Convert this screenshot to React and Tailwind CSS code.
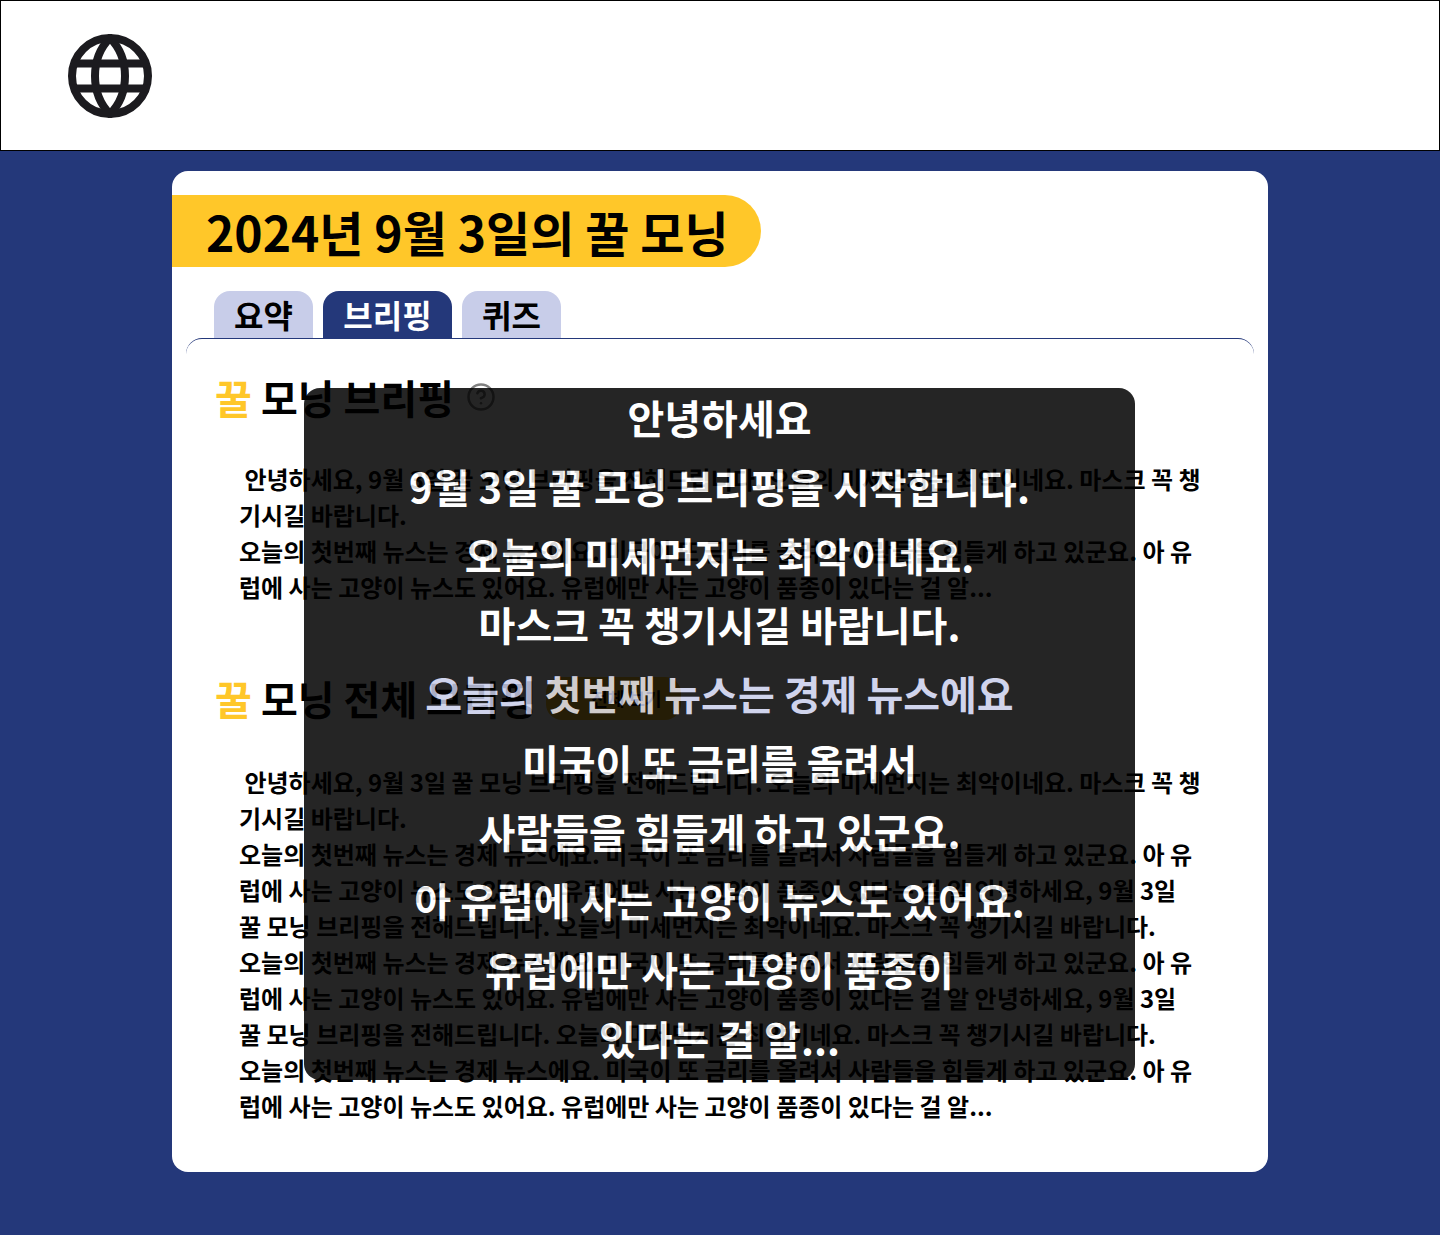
import React from 'react';
import { CircleHelp } from 'lucide-react';

const briefing = ` 안녕하세요, 9월 3일 꿀 모닝 브리핑을 전해드립니다. 오늘의 미세먼지는 최악이네요. 마스크 꼭 챙기시길 바랍니다.
오늘의 첫번째 뉴스는 경제 뉴스에요. 미국이 또 금리를 올려서 사람들을 힘들게 하고 있군요. 아 유럽에 사는 고양이 뉴스도 있어요. 유럽에만 사는 고양이 품종이 있다는 걸 알...`;

const fullBriefing = ` 안녕하세요, 9월 3일 꿀 모닝 브리핑을 전해드립니다. 오늘의 미세먼지는 최악이네요. 마스크 꼭 챙기시길 바랍니다.
오늘의 첫번째 뉴스는 경제 뉴스에요. 미국이 또 금리를 올려서 사람들을 힘들게 하고 있군요. 아 유럽에 사는 고양이 뉴스도 있어요. 유럽에만 사는 고양이 품종이 있다는 걸 알 안녕하세요, 9월 3일 꿀 모닝 브리핑을 전해드립니다. 오늘의 미세먼지는 최악이네요. 마스크 꼭 챙기시길 바랍니다.
오늘의 첫번째 뉴스는 경제 뉴스에요. 미국이 또 금리를 올려서 사람들을 힘들게 하고 있군요. 아 유럽에 사는 고양이 뉴스도 있어요. 유럽에만 사는 고양이 품종이 있다는 걸 알 안녕하세요, 9월 3일 꿀 모닝 브리핑을 전해드립니다. 오늘의 미세먼지는 최악이네요. 마스크 꼭 챙기시길 바랍니다.
오늘의 첫번째 뉴스는 경제 뉴스에요. 미국이 또 금리를 올려서 사람들을 힘들게 하고 있군요. 아 유럽에 사는 고양이 뉴스도 있어요. 유럽에만 사는 고양이 품종이 있다는 걸 알...`;

const captions = [
  '안녕하세요',
  '9월 3일 꿀 모닝 브리핑을 시작합니다.',
  '오늘의 미세먼지는 최악이네요.',
  '마스크 꼭 챙기시길 바랍니다.',
  '오늘의 첫번째 뉴스는 경제 뉴스에요',
  '미국이 또 금리를 올려서',
  '사람들을 힘들게 하고 있군요.',
  '아 유럽에 사는 고양이 뉴스도 있어요.',
  '유럽에만 사는 고양이 품종이',
  '있다는 걸 알...',
];

const Globe = () => (
  <svg width="84" height="84" viewBox="0 0 84 84" fill="none" stroke="#1c1b1f" strokeWidth="8">
    <circle cx="42" cy="42" r="38" />
    <path d="M42 4C22 24 22 60 42 80C62 60 62 24 42 4Z" />
    <path d="M4 29.5H80M4 54.5H80" />
  </svg>
);

const Tab = ({ label, active, width }) => (
  <div
    className={`${width} h-[47px] flex items-center justify-center rounded-t-2xl text-[32px] font-semibold pb-0.5 ${
      active ? 'bg-[#24387a] text-white' : 'bg-[#c8cde9] text-black'
    }`}
  >
    {label}
  </div>
);

const Heading = ({ children }) => (
  <h2 className="text-[40px] leading-[58px] font-bold text-black whitespace-nowrap">
    <span className="text-[#ffc729]">꿀</span> {children}
  </h2>
);

const App = () => {
  return (
    <div className="min-h-[1235px] bg-[#24387a] font-['Noto_Sans_CJK_KR','Noto_Sans',sans-serif]">
      <header className="h-[151px] bg-white border border-black flex items-center pl-[67px]">
        <Globe />
      </header>

      <main className="relative w-[1096px] h-[1001px] mx-auto mt-5 bg-white rounded-2xl pt-6">
        <div className="w-[589px] h-[72px] bg-[#ffc729] rounded-r-full flex items-center pl-[34px]">
          <h1 className="text-5xl font-bold text-black whitespace-nowrap">2024년 9월 3일의 꿀 모닝</h1>
        </div>

        <div className="flex gap-2.5 mt-6 ml-[42px]">
          <Tab label="요약" width="w-[99px]" />
          <Tab label="브리핑" width="w-[129px]" active />
          <Tab label="퀴즈" width="w-[99px]" />
        </div>

        <section className="mx-3.5 border-t border-[#24387a] rounded-t-2xl pt-[29px] pl-[29px]">
          <div className="flex items-center gap-3">
            <Heading>모닝 브리핑</Heading>
            <CircleHelp size={30} strokeWidth={2} className="text-[#808080]" />
          </div>
          <p className="mt-[35px] ml-6 w-[962px] text-2xl leading-9 font-semibold text-black whitespace-pre-wrap">{briefing}</p>

          <div className="flex items-center gap-[9px] mt-16">
            <Heading>모닝 전체 브리핑</Heading>
            <div className="w-[135px] h-[43px] rounded-2xl bg-[#ffc729] flex items-center justify-end pr-[19px] text-lg font-semibold text-black">전체 보기</div>
          </div>
          <p className="mt-[37px] ml-6 w-[962px] text-2xl leading-9 font-semibold text-black whitespace-pre-wrap">{fullBriefing}</p>
        </section>

        {/* caption overlay, whole layer is translucent so the page shows through */}
        <div className="absolute left-[132px] top-[217px] w-[831px] h-[692px] rounded-2xl bg-black opacity-85 overflow-hidden flex flex-col gap-[11px]">
          {captions.map((line, i) => (
            <p
              key={line}
              className={`text-[40px] leading-[58px] font-semibold text-center whitespace-nowrap ${
                i === 4 ? 'text-[#c8cde9]' : 'text-white'
              }`}
            >
              {line}
            </p>
          ))}
        </div>
      </main>
    </div>
  );
};

export default App;
